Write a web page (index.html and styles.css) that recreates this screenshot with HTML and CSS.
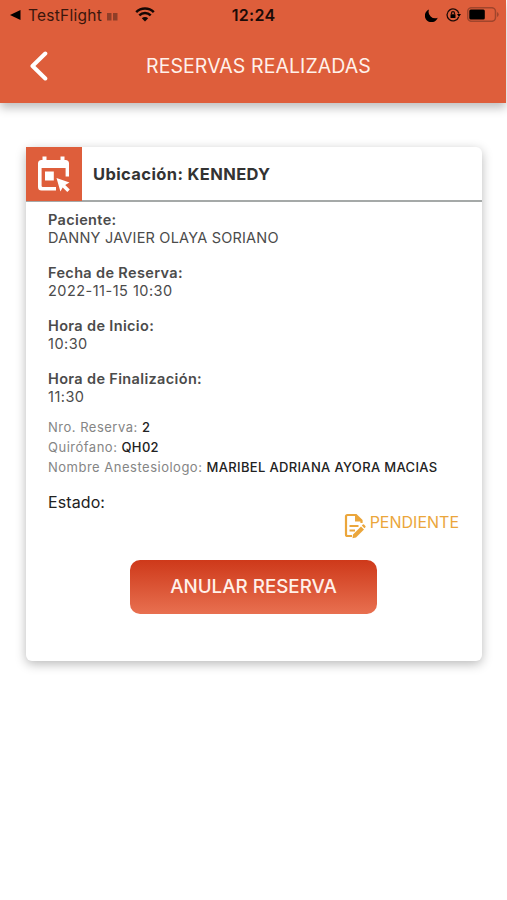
FILE: index.html
```
<!DOCTYPE html>
<html lang="es">
<head>
<meta charset="utf-8">
<title>Reservas realizadas</title>
<link rel="stylesheet" href="styles.css">
</head>
<body>
<header class="top">
  <div class="status">
    <div class="status-left">
      <svg class="back-app" viewBox="0 0 11 10"><path d="M0 5 10.500 0v10z"/></svg>
      <span class="app-name">TestFlight</span>
      <svg class="signal" viewBox="0 0 11 8"><path d="M0 0h4.500v7.500H0zM6 0h4.500v7.500H6z"/></svg>
      <svg class="wifi" viewBox="0 0 20 15"><path d="M1.200 5.200a12.500 12.500 0 0 1 17.600 0M4.300 8.400a8.100 8.100 0 0 1 11.400 0"/><path class="solid" d="M6.800 11.200a4.600 4.600 0 0 1 6.400 0L10 14.500z"/></svg>
    </div>
    <time class="clock">12:24</time>
    <div class="status-right">
      <svg class="moon" viewBox="0 0 13 13"><path d="M4 .5A6.600 6.600 0 1 0 12.700 8.800 6.600 6.600 0 0 1 4 .5z"/></svg>
      <svg class="lock" viewBox="0 0 15 14"><path class="line" d="M12.700 9A6 6 0 1 1 12.900 5.500"/><path d="M11 6h4l-2 3z"/><rect x="4.500" y="6.200" width="5" height="3.900" rx=".6"/><path class="line" d="M5.500 6.500V5.200a1.500 1.500 0 0 1 3 0v1.300"/></svg>
      <svg class="battery" viewBox="0 0 32 15"><rect class="shell" x=".7" y=".7" width="27.800" height="13.600" rx="3.800"/><rect x="2.300" y="2.500" width="15.500" height="10" rx="1.500"/><path class="cap" d="M30 5v5q1.700-.7 1.700-2.500T30 5z"/></svg>
    </div>
  </div>
  <div class="nav">
    <svg class="chevron" viewBox="0 0 18 30"><path d="M15.300 2.500 2.500 15l12.800 12.500"/></svg>
    <h1 class="title">RESERVAS REALIZADAS</h1>
  </div>
</header>
<main class="card">
  <div class="card-head">
    <div class="card-icon">
      <svg viewBox="0 0 34 36"><path fill-rule="evenodd" d="M5.500.5h4V4h14V.5h4V4H28.500Q32 4 32 7.500v13h-3.400V12H4.600v17.800q0 1.200 1.200 1.200H19v3.500H4.500Q1 34.500 1 31V7.500Q1 4 4.500 4h1z"/><path d="M8 15.500h8.800v9H8zM19.500 22l13 4.500-4.300 2.400 4.600 4.600-2.500 2.500-4.600-4.600-2.300 4z"/></svg>
    </div>
    <h2 class="place">Ubicación: KENNEDY</h2>
  </div>
  <div class="card-body">
    <dl class="facts">
      <div class="fact"><dt>Paciente:</dt><dd class="patient">DANNY JAVIER OLAYA SORIANO</dd></div>
      <div class="fact"><dt>Fecha de Reserva:</dt><dd>2022-11-15 10:30</dd></div>
      <div class="fact"><dt>Hora de Inicio:</dt><dd>10:30</dd></div>
      <div class="fact"><dt>Hora de Finalización:</dt><dd>11:30</dd></div>
    </dl>
    <div class="details">
      <p>Nro. Reserva: <b>2</b></p>
      <p>Quirófano: <b>QH02</b></p>
      <p>Nombre Anestesiologo: <b>MARIBEL ADRIANA AYORA MACIAS</b></p>
    </div>
    <p class="state-label">Estado:</p>
    <div class="state">
      <svg viewBox="0 0 22 26"><path class="line" d="M17.500 10V7.500L12 2H3.500Q2 2 2 3.500v18Q2 23 3.500 23H8"/><path d="M11 1v7.500h7.500zM9 21.500l8-8 3 3-8 8L8.500 25.300zM17.800 12.600l1-1q.6-.5 1.200 0l1.400 1.400q.5.600 0 1.200l-1 1z"/><path class="line" d="M5.500 13h9M5.500 17.500h5.500"/></svg>
      <span>PENDIENTE</span>
    </div>
    <button class="cancel" type="button">ANULAR RESERVA</button>
  </div>
</main>
</body>
</html>
```
FILE: styles.css
```
* { box-sizing: border-box; }
body, h1, h2, p, dl, dd { margin: 0; }
body {
  min-height: 900px;
  background: #fff;
  font-family: Inter, "Liberation Sans", sans-serif;
  overflow: hidden;
}
svg { display: block; flex: none; }
.top {
  width: 506px;
  height: 103px;
  background: #de5e3b;
  box-shadow: 0 5px 9px rgba(0, 0, 0, .25);
}
.status {
  display: grid;
  grid-template-columns: 1fr auto 1fr;
  align-items: center;
  height: 30px;
  padding: 0 9px 0 10px;
  color: #1c0b07;
}
.status-left, .status-right { display: flex; align-items: center; }
.status-right { justify-content: flex-end; margin-right: -2px; }
.back-app { width: 11px; height: 10px; margin-right: 7px; }
.app-name { padding-top: 1px; font-size: 15.5px; letter-spacing: .25px; line-height: 20px; color: #3b160c; }
.signal { width: 11px; height: 8px; margin: 4px 0 0 5px; fill: #8f3e28; }
.wifi { width: 20px; height: 15px; margin: -1px 0 0 17px; fill: none; stroke: #140704; stroke-width: 2.500; }
.wifi .solid { fill: #140704; stroke: none; }
.clock { font-size: 16px; font-weight: 600; letter-spacing: .3px; line-height: 20px; }
.moon { width: 13px; height: 13px; }
.lock { width: 15px; height: 14px; margin-left: 8px; }
.lock .line { fill: none; stroke: #1c0b07; stroke-width: 1.300; }
.battery { width: 32px; height: 15px; margin: -2px 0 0 6px; }
.battery .shell { fill: none; stroke: #a0452c; stroke-width: 1.500; }
.battery .cap { fill: #a0452c; }
.nav { display: flex; align-items: center; height: 72px; padding-left: 30px; }
.chevron { width: 18px; height: 30px; fill: none; stroke: #fff; stroke-width: 4; stroke-linecap: round; stroke-linejoin: round; }
.title { margin-left: 98px; color: #fff1ea; font-size: 19.5px; font-weight: 400; letter-spacing: .08px; white-space: nowrap; }
.card {
  width: 456px;
  height: 514px;
  margin: 44px 0 0 26px;
  border-radius: 6px;
  background: #fff;
  box-shadow: 0 3px 11px rgba(0, 0, 0, .28);
}
.card-head { display: flex; align-items: center; height: 55px; border-bottom: 2px solid #a5a9a8; }
.card-icon { align-self: flex-start; width: 56px; height: 54px; padding: 9px 0 0 11px; background: #de5e3b; }
.card-icon svg { width: 34px; height: 36px; fill: #fff; }
.place { margin-left: 11px; color: #333; font-size: 16.5px; font-weight: 700; letter-spacing: .38px; white-space: nowrap; }
.card-body { display: flex; flex-direction: column; padding: 9px 22px 0; }
.facts { display: grid; gap: 17px; color: #4b4b4b; font-size: 14.5px; line-height: 18px; }
.fact dt { font-weight: 600; letter-spacing: .35px; }
.fact dd { letter-spacing: .48px; }
.fact .patient { letter-spacing: .2px; }
.details { margin-top: 11px; color: #858585; font-size: 13px; line-height: 20.200px; letter-spacing: .5px; white-space: nowrap; }
.details b { color: #222; font-weight: 500; letter-spacing: .33px; }
.state-label { margin-top: 14px; color: #222; font-size: 16px; letter-spacing: .1px; line-height: 20px; }
.state { display: flex; justify-content: flex-end; gap: 4px; margin-right: 1px; color: #eba63b; font-size: 16px; line-height: 20px; }
.state svg { width: 22px; height: 26px; margin-top: 1px; fill: currentColor; }
.state .line { fill: none; stroke: currentColor; stroke-width: 2.200; }
.cancel {
  align-self: center;
  width: 247px;
  height: 54px;
  margin: 21px 1px 0 0;
  border: 0;
  border-radius: 10px;
  background: linear-gradient(#ce391a, #e87050);
  color: #fff0e9;
  font: 550 18.800px Inter, sans-serif;
}
```
